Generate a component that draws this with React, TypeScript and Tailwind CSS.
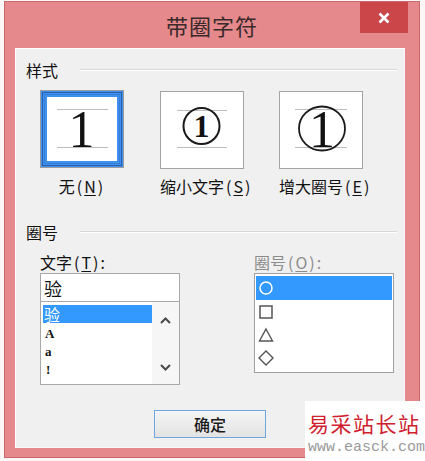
import React from "react";

const cjk = "font-['Noto_Sans_CJK_SC',sans-serif]";

function Key({ label, k }: { label: string; k: string }) {
  return (
    <span className="whitespace-nowrap">
      {label}
      <span className="ml-[2px]">(</span>
      <span className="mx-[2px] underline underline-offset-2">{k}</span>
      <span className="mr-[2px]">)</span>
    </span>
  );
}

function SectionHeader({ title }: { title: string }) {
  return (
    <div className="flex h-[18px] items-center pr-[7px]">
      <span className="text-[16px] leading-[18px] text-[#111]">{title}</span>
      <div className="ml-[22px] h-[2px] flex-1 border-t border-b border-t-[#d7d7d7] border-b-white" />
    </div>
  );
}

function PreviewNone() {
  return (
    <svg width="84" height="78" viewBox="0 0 84 78">
      <rect x="0.5" y="0.5" width="83" height="77" fill="#fff" stroke="#9c9c9c" />
      <rect x="1" y="1" width="82" height="76" fill="#3d8ff0" />
      <rect x="2.5" y="2.5" width="79" height="73" fill="none" stroke="#1b3566" strokeDasharray="1 1" />
      <rect x="4.5" y="4.5" width="75" height="69" fill="none" stroke="#2a4b86" strokeDasharray="1 1" opacity="0.5" />
      <rect x="7" y="7" width="70" height="64" fill="#fff" />
      <line x1="17" y1="19.5" x2="68" y2="19.5" stroke="#bdbdbd" />
      <line x1="17" y1="57.5" x2="68" y2="57.5" stroke="#bdbdbd" />
      <text x="41.5" y="57" textAnchor="middle" fontFamily="Liberation Serif" fontSize="52" fill="#111">
        1
      </text>
    </svg>
  );
}

function PreviewShrink() {
  return (
    <svg width="84" height="78" viewBox="0 0 84 78">
      <rect x="0.5" y="0.5" width="83" height="77" fill="#fff" stroke="#a3a3a3" />
      <line x1="17" y1="19.5" x2="67" y2="19.5" stroke="#bdbdbd" />
      <line x1="17" y1="56.5" x2="67" y2="56.5" stroke="#bdbdbd" />
      <circle cx="41.5" cy="35" r="18" fill="none" stroke="#1a1a1a" strokeWidth="2" />
      <text x="41.5" y="46" textAnchor="middle" fontFamily="Liberation Serif" fontSize="32" fontWeight="bold" fill="#111">
        1
      </text>
    </svg>
  );
}

function PreviewEnlarge() {
  return (
    <svg width="84" height="78" viewBox="0 0 84 78">
      <rect x="0.5" y="0.5" width="83" height="77" fill="#fff" stroke="#a3a3a3" />
      <line x1="16" y1="18.5" x2="68" y2="18.5" stroke="#bdbdbd" />
      <line x1="16" y1="56.5" x2="68" y2="56.5" stroke="#bdbdbd" />
      <ellipse cx="43" cy="37.5" rx="23" ry="22" fill="none" stroke="#1a1a1a" strokeWidth="1.8" />
      <text x="43" y="56" textAnchor="middle" fontFamily="Liberation Serif" fontSize="52" fill="#111">
        1
      </text>
    </svg>
  );
}

function Chevron({ up }: { up?: boolean }) {
  return (
    <svg width="11" height="7" viewBox="0 0 11 7">
      <polyline
        points={up ? "1,6 5.5,1.5 10,6" : "1,1 5.5,5.5 10,1"}
        fill="none"
        stroke="#4a4a4a"
        strokeWidth="2"
      />
    </svg>
  );
}

function Shape({ kind, color }: { kind: string; color: string }) {
  return (
    <svg width="16" height="16" viewBox="0 0 16 16">
      {kind === "circle" && <circle cx="8" cy="8" r="6" fill="none" stroke={color} strokeWidth="1.5" />}
      {kind === "square" && <rect x="2" y="2" width="12" height="12" fill="none" stroke={color} strokeWidth="1.5" />}
      {kind === "triangle" && <polygon points="8,2 14.5,14 1.5,14" fill="none" stroke={color} strokeWidth="1.4" />}
      {kind === "diamond" && <polygon points="8,1 15,8 8,15 1,8" fill="none" stroke={color} strokeWidth="1.4" />}
    </svg>
  );
}

export default function App() {
  return (
    <div className={`relative h-[461px] w-[425px] overflow-hidden bg-[#fdf6f6] ${cjk}`}>
      <div className="ml-[4px] mt-[1px] flex h-[457px] w-[416px] flex-col border border-[#c7686d] bg-[#e5898c]">
        {/* title bar */}
        <div className="grid h-[46px] grid-cols-[1fr_auto_1fr] items-start">
          <div />
          <div className="mt-[9px] text-[22px] leading-[28px] tracking-[1px] text-[#3a2a2b]">带圈字符</div>
          <div className="flex justify-end">
            <button
              type="button"
              className="mr-[11px] flex h-[31px] w-[48px] items-center justify-center bg-[#cb4649]"
              aria-label="关闭"
            >
              <svg width="12" height="12" viewBox="0 0 12 12">
                <path d="M1.5 1.5 L10.5 10.5 M10.5 1.5 L1.5 10.5" stroke="#fff" strokeWidth="2.6" />
              </svg>
            </button>
          </div>
        </div>

        {/* client area */}
        <div className="ml-[10px] flex h-[400px] w-[390px] flex-col border border-t-white border-l-white border-r-[#f7f7f7] border-b-[#f7f7f7] bg-[#f0f0f0] pl-[10px] pt-[12px]">
          <SectionHeader title="样式" />

          <div className="mt-[11px] ml-[14px] flex items-start text-[16px] leading-[18px] text-[#111]">
            <div className="flex w-[84px] flex-col">
              <PreviewNone />
              <div className="mt-[9px] flex justify-center">
                <Key label="无" k="N" />
              </div>
            </div>
            <div className="ml-[36px] mt-[1px] flex w-[84px] flex-col">
              <PreviewShrink />
              <div className="mt-[8px] flex">
                <Key label="缩小文字" k="S" />
              </div>
            </div>
            <div className="ml-[35px] mt-[1px] flex w-[84px] flex-col">
              <PreviewEnlarge />
              <div className="mt-[8px] flex">
                <Key label="增大圈号" k="E" />
              </div>
            </div>
          </div>

          <div className="mt-[28px]">
            <SectionHeader title="圈号" />
          </div>

          <div className="mt-[12px] ml-[14px] flex items-start text-[16px] leading-[18px]">
            <div className="flex w-[140px] flex-col">
              <div className="text-[#111]">
                <Key label="文字" k="T" />:
              </div>
              <div className="mt-[2px] flex h-[29px] items-center border border-[#a8a8a8] bg-white pl-[3px] text-[18px] text-[#111]">
                验
              </div>
              <div className="flex h-[83px] overflow-hidden border border-t-0 border-[#a8a8a8] bg-white">
                <div className="flex-1 pl-[2px] pt-[3px]">
                  <div className="h-[18px] bg-[#3399ff] pl-[1px] text-[16px] leading-[18px] text-white">验</div>
                  <div className="mt-[2px] h-[18px] pl-[2px] font-['Liberation_Serif',serif] text-[13px] font-bold leading-[18px] text-[#111]">
                    A
                  </div>
                  <div className="h-[18px] pl-[2px] font-['Liberation_Serif',serif] text-[13px] font-bold leading-[18px] text-[#111]">
                    a
                  </div>
                  <div className="h-[18px] pl-[3px] font-['Liberation_Serif',serif] text-[13px] font-bold leading-[18px] text-[#111]">
                    !
                  </div>
                </div>
                <div className="flex w-[27px] flex-col items-center bg-[#f6f6f6]">
                  <div className="mt-[15px]">
                    <Chevron up />
                  </div>
                  <div className="mt-[40px]">
                    <Chevron />
                  </div>
                </div>
              </div>
            </div>

            <div className="ml-[74px] flex w-[140px] flex-col">
              <div className="text-[#8c8c8c]">
                <Key label="圈号" k="O" />:
              </div>
              <div className="mt-[2px] flex h-[100px] flex-col border border-[#a0a0a0] bg-white px-[1px] pt-[2px]">
                <div className="flex h-[24px] items-center bg-[#3399ff] pl-[2px]">
                  <Shape kind="circle" color="#ffffff" />
                </div>
                <div className="flex h-[23px] items-center pl-[2px]">
                  <Shape kind="square" color="#555" />
                </div>
                <div className="flex h-[23px] items-center pl-[2px]">
                  <Shape kind="triangle" color="#555" />
                </div>
                <div className="flex h-[23px] items-center pl-[2px]">
                  <Shape kind="diamond" color="#555" />
                </div>
              </div>
            </div>
          </div>

          <div className="ml-[128px] mt-[25px]">
            <button
              type="button"
              className="flex h-[28px] w-[112px] items-center justify-center border border-[#6ea6de] bg-gradient-to-b from-[#f5f5f5] to-[#e3e3e3] text-[16px] font-medium text-[#1a1a1a]"
            >
              确定
            </button>
          </div>
        </div>
      </div>

      {/* watermark */}
      <div className="absolute left-[305px] top-[401px] flex h-[60px] w-[120px] flex-col bg-white pl-[3px]">
        <div className="mt-[10px] text-[21px] leading-[24px] tracking-[1.5px] text-[#d0202e]">易采站长站</div>
        <div className="mt-[4px] font-['Liberation_Mono',monospace] text-[15px] leading-[18px] text-[#9a9a9a]">
          www.easck.com
        </div>
      </div>
    </div>
  );
}
